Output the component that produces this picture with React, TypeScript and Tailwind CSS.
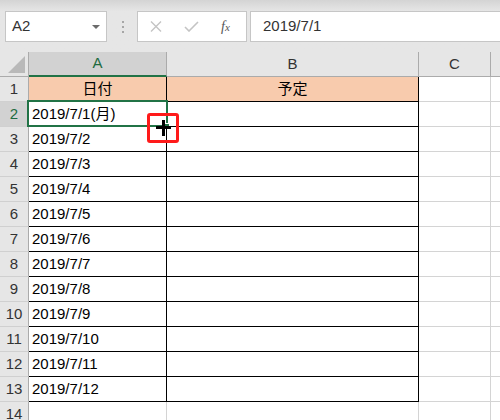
import React from "react";

const FONT = "font-['Liberation_Sans','Noto_Sans_CJK_JP',sans-serif]";

const DATES = [
  "2019/7/1(月)",
  "2019/7/2",
  "2019/7/3",
  "2019/7/4",
  "2019/7/5",
  "2019/7/6",
  "2019/7/7",
  "2019/7/8",
  "2019/7/9",
  "2019/7/10",
  "2019/7/11",
  "2019/7/12",
];

const Toolbar = () => (
  <div className="h-[52px] flex items-start pt-[11px] bg-linear-to-b from-[#d4d4d4] via-[#e6e6e6] via-[22%] to-[#e6e6e6]">
    {/* name box */}
    <div className="ml-[5px] w-[102px] h-[31px] bg-white border border-[#c6c6c6] flex items-center justify-between pl-[6px] pr-[6px]">
      <span className="text-[15px] text-[#333]">A2</span>
      <span className="w-0 h-0 border-l-[4px] border-r-[4px] border-t-[4px] border-l-transparent border-r-transparent border-t-[#6b6b6b]" />
    </div>
    {/* grip dots */}
    <div className="w-[30px] h-[31px] flex flex-col items-center justify-center gap-[3px] pl-[1px]">
      <span className="w-[2px] h-[2px] bg-[#a6a6a6]" />
      <span className="w-[2px] h-[2px] bg-[#a6a6a6]" />
      <span className="w-[2px] h-[2px] bg-[#a6a6a6]" />
    </div>
    {/* cancel / enter / fx */}
    <div className="w-[110px] h-[31px] bg-white border border-[#c6c6c6] flex items-center pl-[12px]">
      <svg width="12" height="11" viewBox="0 0 12 11">
        <path d="M1 0.5 L11 10.5 M11 0.5 L1 10.5" stroke="#c4c4c4" strokeWidth="1.4" fill="none" />
      </svg>
      <svg className="ml-[22px]" width="15" height="11" viewBox="0 0 15 11">
        <path d="M1 6 L5 10 L14 1" stroke="#c4c4c4" strokeWidth="1.6" fill="none" />
      </svg>
      <span className="ml-[22px] font-['Liberation_Serif',serif] italic text-[14px] text-[#555] leading-none">
        f<span className="text-[11px]">x</span>
      </span>
    </div>
    {/* formula bar */}
    <div className="ml-[3px] flex-1 h-[31px] bg-white border border-r-0 border-[#c6c6c6] flex items-center pl-[12px]">
      <span className="text-[15px] text-[#333]">2019/7/1</span>
    </div>
  </div>
);

const HeaderRow = () => (
  <div className="flex h-[25px]">
    <div className="w-[29px] bg-[#e6e6e6] border-r border-b border-[#ababab] relative">
      <span className="absolute right-[3px] bottom-[3px] w-0 h-0 border-l-[17px] border-t-[17px] border-l-transparent border-t-transparent border-b-0 border-r-0 [border-bottom:17px_solid_#b9b9b9] [border-top-width:0]" />
    </div>
    <div className="w-[138px] bg-[#d2d2d2] border-r border-r-[#ababab] border-b-2 border-b-[#217346] flex items-center justify-center text-[15px] text-[#1e6b40]">
      A
    </div>
    <div className="w-[252px] bg-[#e6e6e6] border-r border-b border-[#ababab] flex items-center justify-center text-[15px] text-[#333]">
      B
    </div>
    <div className="w-[72px] bg-[#e6e6e6] border-r border-b border-[#ababab] flex items-center justify-center text-[15px] text-[#333]">
      C
    </div>
    <div className="flex-1 bg-[#e6e6e6] border-b border-[#ababab]" />
  </div>
);

type RowProps = { n: number; a?: string; b?: string; head?: boolean; inTable: boolean };

const Row = ({ n, a, b, head, inTable }: RowProps) => {
  const selected = n === 2;
  const tableBorder = inTable ? "border-black" : "border-[#d4d4d4]";
  const fill = head ? "bg-[#f8cbad]" : "bg-white";
  return (
    <div className="flex h-[25px]">
      <div
        className={`w-[29px] border-r border-r-[#ababab] border-b border-b-[#d0d0d0] flex items-center justify-center text-[15px] ${
          selected ? "bg-[#d2d2d2] text-[#1e6b40]" : "bg-[#e6e6e6] text-[#333]"
        }`}
      >
        {n}
      </div>
      <div
        className={`w-[138px] border-r border-b ${tableBorder} ${fill} flex items-center text-[15px] text-black ${
          head ? "justify-center" : "pl-[3px]"
        }`}
      >
        {a}
      </div>
      <div className={`w-[252px] border-r border-b ${tableBorder} ${fill} flex items-center justify-center text-[15px] text-black`}>
        {b}
      </div>
      <div className="w-[72px] border-r border-b border-[#d4d4d4]" />
      <div className="flex-1 border-b border-[#d4d4d4]" />
    </div>
  );
};

export default function App() {
  return (
    <div className={`relative w-[500px] h-[420px] overflow-hidden bg-white ${FONT}`}>
      <Toolbar />
      <HeaderRow />
      <Row n={1} a="日付" b="予定" head inTable />
      {DATES.map((d, i) => (
        <Row key={d} n={i + 2} a={d} inTable />
      ))}
      <Row n={14} inTable={false} />

      {/* active cell outline */}
      <div className="absolute left-[27px] top-[100px] w-[141px] h-[27px] border-2 border-[#217346]" />
      {/* fill handle */}
      <div className="absolute left-[164px] top-[123px] w-[6px] h-[5px] bg-[#217346] border border-white" />
      {/* red highlight box */}
      <div className="absolute left-[147px] top-[113px] w-[32px] h-[30px] border-[3px] border-[#ff1a1a] rounded-[3px]" />
      {/* fill cursor */}
      <svg className="absolute left-[156px] top-[120px]" width="15" height="16" viewBox="0 0 15 16">
        <rect x="0" y="6" width="15" height="3" fill="#000" />
        <rect x="6" y="0" width="3" height="16" fill="#000" />
      </svg>
    </div>
  );
}
